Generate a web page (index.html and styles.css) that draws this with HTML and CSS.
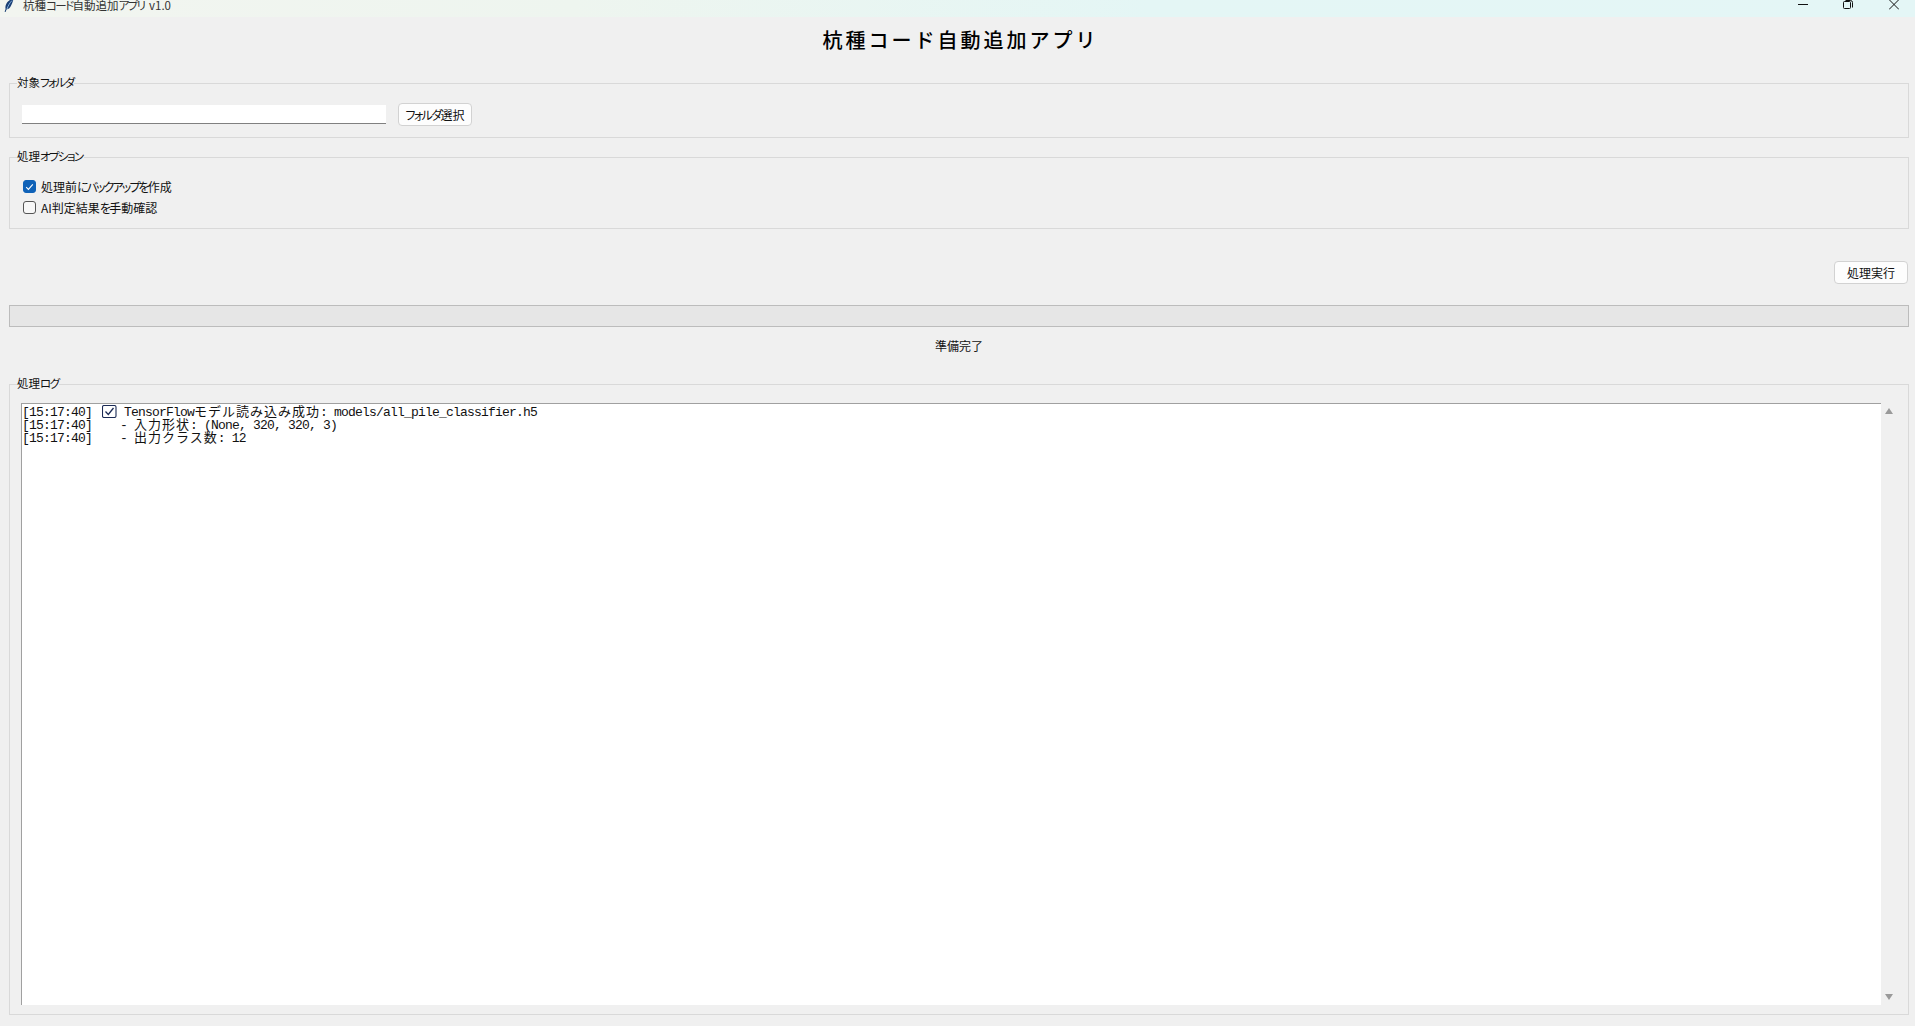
FILE: index.html
```html
<!DOCTYPE html>
<html lang="ja">
<head>
<meta charset="utf-8">
<title>杭種コード自動追加アプリ v1.0</title>
<link rel="stylesheet" href="styles.css">
</head>
<body>
<div class="app">
  <header class="titlebar">
    <div class="titlebar-left">
      <svg class="feather" width="10" height="13" viewBox="0 0 10 13"><path d="M9.500 0C6 .2 3 2.500 1.800 6c-.5 1.600-.5 3-.2 3.900L.6 12.800l1 .2.900-2.500c1.800-.2 3.500-1.400 4.500-3.700C8 4.700 9 2.300 9.500 0z" fill="#1b3f75"/><path d="M8 1.500C6 3.500 4.200 6.500 3 10" stroke="#8fbde8" stroke-width=".9" fill="none"/></svg>
      <span class="app-name">杭種<span class="kana">コード</span>自動追加<span class="kana">アプリ</span> <span class="app-version">v1.0</span></span>
    </div>
    <div class="window-controls">
      <svg class="win-btn win-min" width="10" height="10" viewBox="0 0 10 10"><path d="M0 4.500h10" stroke="#111" fill="none"/></svg>
      <svg class="win-btn" width="10" height="10" viewBox="0 0 10 10"><rect x=".5" y="1.500" width="7" height="7" rx="1" stroke="#111" fill="none"/><path d="M2.500 0.500h5a2 2 0 0 1 2 2v5" stroke="#111" fill="none"/></svg>
      <svg class="win-btn" width="10" height="10" viewBox="0 0 10 10"><path d="M0 -.5l10 10M10 -.5L0 9.500" stroke="#111" fill="none"/></svg>
    </div>
  </header>

  <h1 class="heading">杭種コード自動追加アプリ</h1>

  <main class="content">
    <fieldset class="group group-folder">
      <legend>対象<span class="kana">フォルダ</span></legend>
      <div class="folder-row">
        <div class="entry"></div>
        <button class="btn" type="button"><span class="kana">フォルダ</span>選択</button>
      </div>
    </fieldset>

    <fieldset class="group group-options">
      <legend>処理<span class="kana">オプション</span></legend>
      <div class="options-list">
        <label class="check-row">
          <span class="check checked"><svg width="9" height="8" viewBox="0 0 9 8"><path d="M1.200 4.200l2.200 2.200 4.400-5" stroke="#fff" stroke-width="1.100" fill="none"/></svg></span>
          <span>処理前<span class="kana kana-tight">にバックアップを</span>作成</span>
        </label>
        <label class="check-row">
          <span class="check"></span>
          <span>AI判定結果<span class="kana">を</span>手動確認</span>
        </label>
      </div>
    </fieldset>

    <div class="action-row">
      <button class="btn" type="button">処理実行</button>
    </div>

    <div class="progress"></div>
    <div class="status">準備完了</div>

    <fieldset class="group group-log">
      <legend>処理<span class="kana">ログ</span></legend>
      <div class="log-wrap">
        <div class="log">
          <div class="line"><span class="mono">[15:17:40] </span><svg class="tick" width="15" height="13" viewBox="0 0 15 13"><rect x=".5" y=".5" width="13.500" height="12" rx="1.500" fill="#fff" stroke="#1b2a55" stroke-width="1.100"/><path d="M3.500 6.500l2.800 3 5.200-6.500" stroke="#1b2a55" stroke-width="1.300" fill="none"/></svg><span class="mono"> TensorFlow</span>モデル読み込み成功<span class="mono">: models/all_pile_classifier.h5</span></div>
          <div class="line"><span class="mono">[15:17:40]    - </span>入力形状<span class="mono">: (None, 320, 320, 3)</span></div>
          <div class="line"><span class="mono">[15:17:40]    - </span>出力クラス数<span class="mono">: 12</span></div>
        </div>
        <div class="scrollbar">
          <span class="arrow-up"></span>
          <span class="arrow-down"></span>
        </div>
      </div>
    </fieldset>
  </main>
</div>
</body>
</html>
```
FILE: styles.css
```css
* { box-sizing: border-box; }
html, body { margin: 0; padding: 0; height: 100%; overflow: hidden; }
body {
  background: #f0f0f0;
  color: #111;
  font-family: "Noto Sans CJK JP", "Noto Sans", sans-serif;
  font-size: 12px;
  font-feature-settings: "palt";
}
.app { height: 1026px; display: flex; flex-direction: column; }
.kana { letter-spacing: -1.600px; }
.kana-tight { letter-spacing: -1.900px; }

.titlebar {
  height: 17px;
  flex: none;
  display: flex;
  justify-content: space-between;
  overflow: hidden;
  background: linear-gradient(90deg, #f2f5f0 0%, #eef5ef 30%, #e4f6f5 60%, #e4f6f6 100%);
  color: #333;
}
.titlebar-left { display: flex; align-items: flex-start; height: 17px; line-height: 11px; padding-left: 4px; }
.app-name { margin-left: 9px; font-size: 11.500px; }
.app-version { margin-left: 2px; }
.feather { margin-top: -1px; }
.window-controls { display: flex; gap: 36px; padding-right: 16px; }
.win-btn { display: block; width: 10px; height: 10px; }
.win-min { margin-right: -1px; }

.heading {
  flex: none;
  margin: 0;
  height: 59px;
  padding-top: 9px;
  line-height: 28px;
  text-align: center;
  text-indent: 6px;
  font-size: 20px;
  font-weight: 500;
  letter-spacing: 3px;
  font-feature-settings: normal;
  color: #000;
}

.content { flex: 1; display: flex; flex-direction: column; padding: 0 6px 11px 9px; min-height: 0; }

.group { margin: 0; min-width: 0; border: 1px solid #d9d9d9; padding: 0; }
.group legend { margin-left: 7px; padding: 0 1px 0 0; height: 14px; line-height: 12px; font-size: 11.500px; color: #111; }

.group-folder { height: 62px; }
.folder-row { display: flex; align-items: center; gap: 12px; margin: 13px 0 0 12px; }
.entry { width: 364px; height: 19px; background: #fff; border-bottom: 1px solid #808080; }
.btn {
  height: 23px;
  padding: 0;
  width: 74px;
  background: #fdfdfd;
  border: 1px solid #d2d2d2;
  border-radius: 4px;
  font: inherit;
  line-height: 19px;
  font-feature-settings: inherit;
  color: #111;
}

.group-options { height: 79px; margin-top: 12px; }
.options-list { display: flex; flex-direction: column; gap: 8px; margin: 16px 0 0 13px; }
.check-row { display: flex; align-items: center; gap: 5px; height: 13px; color: #111; }
.check {
  width: 13px;
  height: 13px;
  flex: none;
  border: 1px solid #555;
  border-radius: 3px;
  background: #f7f7f7;
  display: flex;
  align-items: center;
  justify-content: center;
}
.check.checked { background: #0f62b8; border-color: #0f62b8; }

.action-row { display: flex; justify-content: flex-end; margin-top: 32px; padding-right: 1px; }
.progress { height: 22px; margin-top: 21px; background: #e6e6e6; border: 1px solid #bcbcbc; }
.status { height: 14px; margin-top: 12px; line-height: 14px; text-align: center; color: #111; }

.group-log { flex: 1; min-height: 0; margin-top: 24px; display: flex; flex-direction: column; }
.log-wrap { flex: 1; min-height: 0; display: flex; margin: 12px 0 9px 11px; }
.log {
  flex: 1;
  padding: 0;
  background: #fff;
  border-top: 1px solid #a0a0a0;
  border-left: 1px solid #a0a0a0;
  font-feature-settings: normal;
  overflow: hidden;
}
.line {
  height: 13px;
  line-height: 13px;
  white-space: pre;
  font-family: "Noto Sans CJK JP", sans-serif;
  font-size: 13px;
  letter-spacing: 1px;
  color: #111;
}
.mono { font-family: "Liberation Mono", monospace; font-size: 13px; letter-spacing: -.800px; }
.tick { vertical-align: -2px; margin-left: 3px; }

.scrollbar { width: 27px; flex: none; position: relative; }
.arrow-up, .arrow-down {
  position: absolute;
  left: 4px;
  width: 0;
  height: 0;
  border-left: 4px solid transparent;
  border-right: 4px solid transparent;
}
.arrow-up { top: 5px; border-bottom: 6px solid #9a9a9a; }
.arrow-down { bottom: 5px; border-top: 6px solid #9a9a9a; }
```
